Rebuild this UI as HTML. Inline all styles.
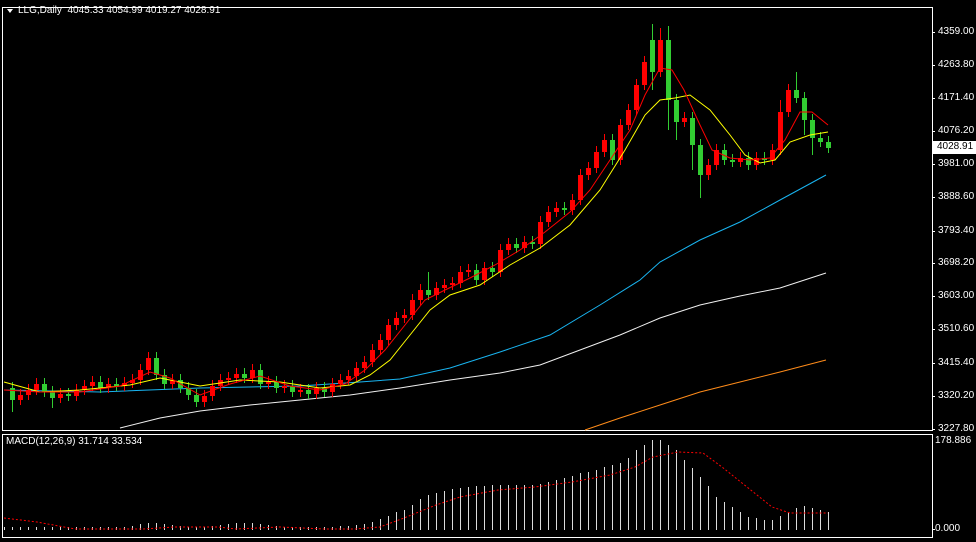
<!DOCTYPE html>
<html><head><meta charset="utf-8">
<style>
html,body{margin:0;padding:0;background:#000;width:976px;height:542px;overflow:hidden}
svg{position:absolute;left:0;top:0}
.t{position:absolute;font-family:"Liberation Sans",sans-serif;font-size:10px;color:#fff;white-space:nowrap}
.a{left:938px}
</style></head><body>
<svg width="976" height="542" xmlns="http://www.w3.org/2000/svg">
<rect x="2.5" y="7.5" width="930" height="423" fill="none" stroke="#fff"/>
<rect x="2.5" y="434.5" width="930" height="103" fill="none" stroke="#fff"/>
<path d="M7 9 L13 9 L10 13 Z" fill="#fff"/>
<g stroke="#fff" stroke-width="1">
<path d="M932 32.5h3M932 65.5h3M932 98.5h3M932 131.5h3M932 164.5h3M932 197.5h3M932 231.5h3M932 263.5h3M932 296.5h3M932 329.5h3M932 363.5h3M932 396.5h3M932 429.5h3M932 529.5h3"/>
</g>
<polyline fill="none" stroke="#19b4f0" points="4,390 100,392 200,388 300,386 360,382 400,379 450,368 500,352 550,335 600,305 640,280 660,262 700,240 740,222 780,200 826,175"/>
<polyline fill="none" stroke="#f0f0f0" points="120,428 160,418 200,411 250,405 300,400 350,395 400,388 450,380 500,373 540,365 580,350 620,335 660,318 700,305 740,296 780,288 826,273"/>
<polyline fill="none" stroke="#ff8c1a" points="585,430 620,418 660,405 700,392 740,382 780,372 826,360"/>
<path stroke="#ff0000" stroke-width="1" fill="none" d="M20.5 389V405M28.5 384V400M36.5 378V395M60.5 388V403M76.5 384V401M84.5 380V395M92.5 376V391M108.5 378V393M124.5 377V391M132.5 374V388M140.5 364V385M148.5 352V375M172.5 374V389M204.5 390V407M212.5 380V401M220.5 374V391M228.5 372V385M236.5 368V383M252.5 364V383M268.5 376V389M284.5 380V393M300.5 384V397M316.5 382V399M332.5 378V397M340.5 374V389M348.5 370V385M356.5 362V381M364.5 356V373M372.5 344V367M380.5 334V355M388.5 319V345M396.5 312V330M404.5 309V323M412.5 294V320M420.5 284V305M436.5 282V300M444.5 279V293M452.5 277V290M460.5 266V288M468.5 264V277M484.5 262V285M500.5 244V277M508.5 238V255M524.5 236V253M540.5 216V249M548.5 206V227M556.5 202V217M572.5 194V215M580.5 169V205M588.5 162V180M596.5 146V173M604.5 134V157M620.5 119V165M628.5 104V130M636.5 79V115M644.5 56V90M660.5 28V77M684.5 112V127M708.5 159V180M716.5 144V170M740.5 152V167M756.5 152V170M772.5 144V165M780.5 100V155M788.5 84V117"/>
<path stroke="#ff0000" stroke-width="5" fill="none" d="M20.5 395V400M28.5 390V395M36.5 384V390M60.5 394V398M76.5 390V396M84.5 386V390M92.5 382V386M108.5 384V388M124.5 383V386M132.5 380V383M140.5 370V380M148.5 358V370M172.5 380V384M204.5 396V402M212.5 386V396M220.5 380V386M228.5 378V380M236.5 374V378M252.5 370V378M268.5 382V384M284.5 386V388M300.5 390V392M316.5 388V394M332.5 384V392M340.5 380V384M348.5 376V380M356.5 368V376M364.5 362V368M372.5 350V362M380.5 340V350M388.5 325V340M396.5 318V325M404.5 315V318M412.5 300V315M420.5 290V300M436.5 288V295M444.5 285V288M452.5 283V285M460.5 272V283M468.5 270V272M484.5 268V280M500.5 250V272M508.5 244V250M524.5 242V248M540.5 222V244M548.5 212V222M556.5 208V212M572.5 200V210M580.5 175V200M588.5 168V175M596.5 152V168M604.5 140V152M620.5 125V160M628.5 110V125M636.5 85V110M644.5 62V85M660.5 40V72M684.5 118V122M708.5 165V175M716.5 150V165M740.5 158V162M756.5 158V165M772.5 150V160M780.5 112V150M788.5 90V112"/>
<path stroke="#32cd32" stroke-width="1" fill="none" d="M12.5 382V412M44.5 378V397M52.5 386V408M68.5 388V401M100.5 376V393M116.5 378V391M156.5 352V380M164.5 369V389M180.5 374V393M188.5 382V400M196.5 389V407M244.5 368V383M260.5 364V389M276.5 376V393M292.5 380V397M308.5 384V399M324.5 382V397M428.5 272V300M476.5 264V285M492.5 262V277M516.5 238V253M532.5 236V249M564.5 202V215M612.5 134V165M652.5 24V90M668.5 26V130M676.5 94V140M692.5 112V170M700.5 139V198M724.5 144V165M732.5 154V167M748.5 152V170M764.5 152V165M796.5 72V103M804.5 92V135M812.5 114V155M820.5 132V147M828.5 136V153"/>
<path stroke="#32cd32" stroke-width="5" fill="none" d="M12.5 388V400M44.5 384V392M52.5 392V398M68.5 394V396M100.5 382V388M116.5 384V386M156.5 358V375M164.5 375V384M180.5 380V388M188.5 388V395M196.5 395V402M244.5 374V378M260.5 370V384M276.5 382V388M292.5 386V392M308.5 390V394M324.5 388V392M428.5 290V295M476.5 270V280M492.5 268V272M516.5 244V248M532.5 242V244M564.5 208V210M612.5 140V160M652.5 40V72M668.5 40V100M676.5 100V122M692.5 118V145M700.5 145V175M724.5 150V160M732.5 160V162M748.5 158V165M764.5 158V160M796.5 90V98M804.5 98V120M812.5 120V138M820.5 138V142M828.5 142V148"/>
<polyline fill="none" stroke="#ffff00" points="4,382 40,392 80,390 130,385 160,378 200,386 240,380 280,382 320,388 350,385 370,375 390,360 410,335 430,310 450,295 480,285 510,265 540,248 570,225 600,190 625,150 645,115 660,100 675,98 690,95 710,110 730,135 745,155 760,163 775,160 790,142 810,135 828,132"/>
<polyline fill="none" stroke="#ff0000" points="4,390 40,392 80,392 120,386 150,372 170,378 200,395 230,384 260,376 290,386 320,390 345,384 365,370 385,350 405,325 425,300 445,290 470,278 495,265 520,250 545,232 570,212 590,190 610,160 630,130 645,95 660,68 672,70 684,90 700,125 712,150 730,158 750,160 770,158 785,140 800,112 812,112 828,125"/>
<path stroke="#dcdcdc" stroke-width="1" fill="none" d="M4.5 530V527M12.5 530V527M20.5 530V527M28.5 530V527M36.5 530V527M44.5 530V527M52.5 530V527M60.5 530V527M68.5 530V527M76.5 530V527M84.5 530V527M92.5 530V527M100.5 530V527M108.5 530V527M116.5 530V527M124.5 530V527M132.5 530V526M140.5 530V524M148.5 530V523M156.5 530V523M164.5 530V524M172.5 530V525M180.5 530V526M188.5 530V527M196.5 530V527M204.5 530V527M212.5 530V526M220.5 530V525M228.5 530V524M236.5 530V523M244.5 530V523M252.5 530V523M260.5 530V524M268.5 530V525M276.5 530V526M284.5 530V527M292.5 530V527M300.5 530V527M308.5 530V527M316.5 530V527M324.5 530V527M332.5 530V527M340.5 530V526M348.5 530V526M356.5 530V525M364.5 530V524M372.5 530V522M380.5 530V519M388.5 530V516M396.5 530V512M404.5 530V510M412.5 530V505M420.5 530V499M428.5 530V495M436.5 530V493M444.5 530V491M452.5 530V489M460.5 530V488M468.5 530V487M476.5 530V486M484.5 530V486M492.5 530V485M500.5 530V485M508.5 530V485M516.5 530V485M524.5 530V485M532.5 530V485M540.5 530V484M548.5 530V482M556.5 530V480M564.5 530V478M572.5 530V476M580.5 530V473M588.5 530V472M596.5 530V470M604.5 530V467M612.5 530V465M620.5 530V463M628.5 530V458M636.5 530V450M644.5 530V445M652.5 530V440M660.5 530V440M668.5 530V445M676.5 530V450M684.5 530V460M692.5 530V468M700.5 530V477M708.5 530V486M716.5 530V497M724.5 530V502M732.5 530V507M740.5 530V512M748.5 530V517M756.5 530V518M764.5 530V520M772.5 530V520M780.5 530V516M788.5 530V513M796.5 530V508M804.5 530V506M812.5 530V508M820.5 530V510M828.5 530V512"/>
<polyline fill="none" stroke="#ff0000" stroke-dasharray="2,2" points="4,518 37,522 75,529 143,529 174,527 218,527 236,529 280,527 324,529 355,529 380,527 404,518 436,505 460,497 498,490 535,487 572,482 610,475 635,467 653,457 678,452 703,453 722,467 747,487 772,507 790,513 828,513"/>
<rect x="933" y="141" width="43" height="13" fill="#fff"/>
</svg>
<div class="t" style="left:18px;top:5px">LLG,Daily&nbsp; 4045.33 4054.99 4019.27 4028.91</div>
<div class="t" style="left:6px;top:436px">MACD(12,26,9) 31.714 33.534</div>
<div class="t a" style="top:26px">4359.00</div>
<div class="t a" style="top:59px">4263.80</div>
<div class="t a" style="top:92px">4171.40</div>
<div class="t a" style="top:125px">4076.20</div>
<div class="t a" style="top:141px;color:#000;left:937px">4028.91</div>
<div class="t a" style="top:158px">3981.00</div>
<div class="t a" style="top:191px">3888.60</div>
<div class="t a" style="top:225px">3793.40</div>
<div class="t a" style="top:257px">3698.20</div>
<div class="t a" style="top:290px">3603.00</div>
<div class="t a" style="top:323px">3510.60</div>
<div class="t a" style="top:357px">3415.40</div>
<div class="t a" style="top:390px">3320.20</div>
<div class="t a" style="top:423px">3227.80</div>
<div class="t" style="left:935px;top:435px">178.886</div>
<div class="t" style="left:935px;top:523px">0.000</div>
</body></html>
